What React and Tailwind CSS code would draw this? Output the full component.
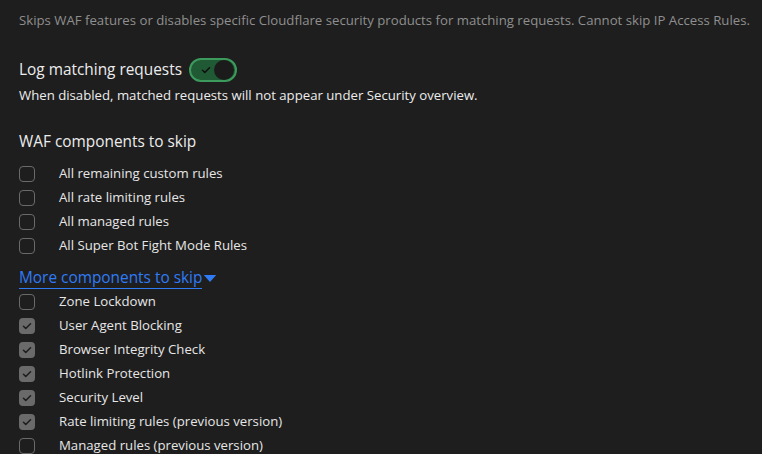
import React from "react";

const Check = ({ className }) => (
  <svg viewBox="0 0 16 16" className={className} fill="none" stroke="currentColor" strokeWidth="1.8" strokeLinecap="round" strokeLinejoin="round">
    <path d="M4 8.3l2.6 2.6L12 5.5" />
  </svg>
);

const Box = ({ checked }) =>
  checked ? (
    <span className="flex h-4 w-4 items-center justify-center rounded-[4px] bg-[#6a6a6a] text-[#1e1e1e]">
      <Check className="h-[14px] w-[14px]" />
    </span>
  ) : (
    <span className="h-4 w-4 rounded-[4px] border border-[#6a6a6a]" />
  );

const Row = ({ label, checked }) => (
  <div className="flex h-6 items-center">
    <div className="flex w-10 items-center">
      <Box checked={checked} />
    </div>
    <span className="text-[13.2px] text-[#e6e6e6]">{label}</span>
  </div>
);

export default function App() {
  return (
    <div
      className="h-[454px] w-[762px] overflow-hidden bg-[#1e1e1e] pl-[19px] text-[#e6e6e6]"
      style={{ fontFamily: '"Open Sans", "Noto Sans", sans-serif' }}
    >
      <p className="whitespace-nowrap pt-[10px] text-[13.2px] leading-[20px] text-[#8f8f8f]">
        Skips WAF features or disables specific Cloudflare security products for matching requests. Cannot skip IP Access Rules.
      </p>

      <div className="mt-[28px] flex items-center gap-[7px]">
        <span className="text-[15.4px] leading-[24px] text-[#ececec]">Log matching requests</span>
        <span className="flex h-6 w-12 items-center justify-between rounded-full border-2 border-[#3c9a5c] bg-[#1f5a34] pl-[8px] pr-[1px]">
          <Check className="h-[14px] w-[14px] text-[#111]" />
          <span className="h-[20px] w-[20px] rounded-full bg-[#1b1b1b]" />
        </span>
      </div>
      <p className="mt-[3px] text-[13.2px] leading-[20px] text-[#ececec]">
        When disabled, matched requests will not appear under Security overview.
      </p>

      <h3 className="mt-[25px] text-[15.4px] leading-[24px] text-[#ececec]">WAF components to skip</h3>
      <div className="mt-[8px] flex flex-col">
        <Row label="All remaining custom rules" />
        <Row label="All rate limiting rules" />
        <Row label="All managed rules" />
        <Row label="All Super Bot Fight Mode Rules" />
      </div>

      <div className="mt-[10px] flex items-center">
        <span className="border-b border-[#2f7bf6] text-[15.4px] leading-[20px] text-[#2f7bf6]">More components to skip</span>
        <svg viewBox="0 0 14 9" className="ml-[1px] h-[8px] w-[14px]" fill="#2f7bf6">
          <path d="M0 0h14L7 8z" />
        </svg>
      </div>
      <div className="mt-[1px] flex flex-col">
        <Row label="Zone Lockdown" />
        <Row label="User Agent Blocking" checked />
        <Row label="Browser Integrity Check" checked />
        <Row label="Hotlink Protection" checked />
        <Row label="Security Level" checked />
        <Row label="Rate limiting rules (previous version)" checked />
        <Row label="Managed rules (previous version)" />
      </div>
    </div>
  );
}
